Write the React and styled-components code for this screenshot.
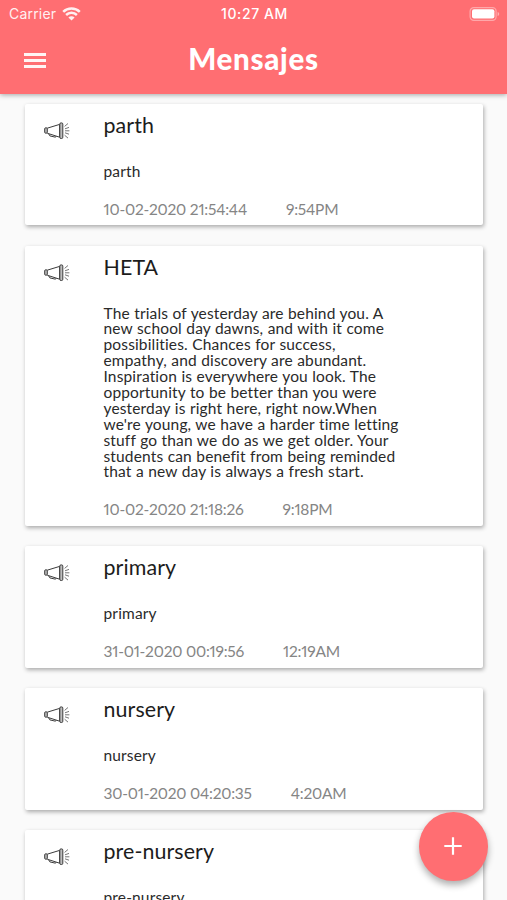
import React from 'react'
import styled, { createGlobalStyle } from 'styled-components';

const messages = [
    { id: 1, title: 'parth', lines: ['parth'], date: '10-02-2020 21:54:44', time: '9:54PM' },
    {
        id: 2,
        title: 'HETA',
        lines: [
            'The trials of yesterday are behind you. A',
            'new school day dawns, and with it come',
            'possibilities. Chances for success,',
            'empathy, and discovery are abundant.',
            'Inspiration is everywhere you look. The',
            'opportunity to be better than you were',
            'yesterday is right here, right now.When',
            "we're young, we have a harder time letting",
            'stuff go than we do as we get older. Your',
            'students can benefit from being reminded',
            'that a new day is always a fresh start.',
        ],
        date: '10-02-2020 21:18:26',
        time: '9:18PM',
    },
    { id: 3, title: 'primary', lines: ['primary'], date: '31-01-2020 00:19:56', time: '12:19AM' },
    { id: 4, title: 'nursery', lines: ['nursery'], date: '30-01-2020 04:20:35', time: '4:20AM' },
    { id: 5, title: 'pre-nursery', lines: ['pre-nursery'] },
]

const WifiIcon = () => (
    <svg width='19' height='14' viewBox='0 0 19 14' fill='none' stroke='#ffffff' strokeWidth='2.5'>
        <path d='M1.2 4.9a11.8 11.8 0 0 1 16.6 0' />
        <path d='M4.1 8a7.7 7.7 0 0 1 10.8 0' />
        <path d='M9.5 13.6L6.4 10.5a4.4 4.4 0 0 1 6.2 0z' fill='#ffffff' stroke='none' />
    </svg>
)

const BatteryIcon = () => (
    <svg width='31' height='14' viewBox='0 0 31 14'>
        <rect x='1.1' y='0.7' width='26' height='12.6' rx='3.6' fill='none' stroke='#ffffff' strokeOpacity='0.4' strokeWidth='1.2' />
        <rect x='3' y='2.3' width='22.4' height='9.2' rx='2' fill='#ffffff' />
        <path d='M28.6 5v4c1-.4 1.6-1.1 1.6-2s-.6-1.6-1.6-2z' fill='#ffffff' fillOpacity='0.45' />
    </svg>
)

const MegaphoneIcon = () => (
    <svg width='26' height='18' viewBox='0 0 26 18' fill='none' stroke='#3c3c3c' strokeWidth='1' strokeLinejoin='round'>
        <path d='M3.2 6.2L15.6 2.4v12.8L3.2 11.2' />
        <rect x='0.7' y='5.8' width='2.6' height='5.4' rx='1' fill='#bdbdbd' />
        <rect x='15.8' y='0.9' width='3' height='15.6' rx='1.2' fill='#bdbdbd' />
        <path d='M4.6 11.8l1.3 2.1 5.6 1.3.6-1' />
        <path d='M20.6 4.4l3.4-2.9M21 6.8l4-1.4M21 8.8h4.4M21 10.8l4 1.4M20.6 13.2l3.4 2.9' stroke='#777777' />
    </svg>
)

const App = () => {
  return (
    <Screen>
        <GlobalStyle />
        <Header>
            <StatusBar>
                <Carrier>Carrier <WifiIcon /></Carrier>
                <Clock>10:27 AM</Clock>
                <Battery><BatteryIcon /></Battery>
            </StatusBar>
            <NavBar>
                <MenuBtn aria-label='menu'>
                    <span />
                    <span />
                    <span />
                </MenuBtn>
                <h1>Mensajes</h1>
            </NavBar>
        </Header>
        <MessageList>
            {messages.map((item) => (
                <Card key={item.id}>
                    <IconDiv><MegaphoneIcon /></IconDiv>
                    <InfoDiv>
                        <h2>{item.title}</h2>
                        <Body>{item.lines.join('\n')}</Body>
                        {item.date && (
                            <DateDiv>
                                <span>{item.date}</span>
                                <span>{item.time}</span>
                            </DateDiv>
                        )}
                    </InfoDiv>
                </Card>
            ))}
        </MessageList>
        <AddBtn aria-label='add'>
            <svg width='18' height='18' viewBox='0 0 18 18' stroke='#ffffff' strokeWidth='2.2'>
                <path d='M9 0.3v17.4M0.3 9h17.4' />
            </svg>
        </AddBtn>
    </Screen>
  )
}

export default App

const GlobalStyle = createGlobalStyle`
    * {
        box-sizing: border-box;
    }

    body {
        margin: 0;
        background-color: #fafafa;
        overflow: hidden;
    }

    h1, h2, p {
        margin: 0;
    }
`;

const Screen = styled.div`
    width: 100%;
    height: 900px;
    overflow: hidden;
    display: flex;
    flex-direction: column;
    background-color: #fafafa;
    font-family: Lato, 'Liberation Sans', sans-serif;
`;

const Header = styled.header`
    flex: none;
    height: 93.5px;
    color: #ffffff;
    background-color: #ff6e72;
    box-shadow: 0 1px 5px rgba(0, 0, 0, 0.35);
    z-index: 1;
`;

const StatusBar = styled.div`
    height: 27px;
    padding: 0 7px 0 9px;
    display: grid;
    grid-template-columns: 1fr auto 1fr;
    align-items: center;
    font-family: Inter, 'Liberation Sans', sans-serif;
    font-size: 14px;
`;

const Carrier = styled.div`
    display: flex;
    align-items: center;
    gap: 6px;
    letter-spacing: 0.2px;
    opacity: 0.9;
`;

const Clock = styled.div`
    font-weight: 500;
    letter-spacing: 0.6px;
`;

const Battery = styled.div`
    display: flex;
    justify-content: flex-end;
`;

const NavBar = styled.div`
    height: 66px;
    display: grid;
    grid-template-columns: 70px 1fr 70px;
    align-items: center;

    h1 {
        padding-bottom: 2px;
        font-size: 29.5px;
        font-weight: 900;
        line-height: 36px;
        letter-spacing: 0.7px;
        text-align: center;
    }
`;

const MenuBtn = styled.button`
    margin-left: 24px;
    padding: 0;
    width: 22px;
    display: flex;
    flex-direction: column;
    gap: 3px;
    border: 0;
    background-color: transparent;

    span {
        height: 3px;
        background-color: #ffffff;
        opacity: 0.92;
    }
`;

const MessageList = styled.main`
    flex: 1;
    min-height: 0;
    padding: 10.3px 24px 0 25px;
    display: flex;
    flex-direction: column;
    gap: 20.3px;
`;

const Card = styled.article`
    flex: none;
    padding: 8px 19px 6.6px;
    display: flex;
    border-radius: 2px;
    background-color: #ffffff;
    box-shadow: 1px 2px 4px rgba(0, 0, 0, 0.32);
`;

const IconDiv = styled.div`
    width: 60px;
    padding-top: 10px;
`;

const InfoDiv = styled.div`
    h2 {
        margin-left: -0.5px;
        font-size: 21.4px;
        font-weight: 400;
        line-height: 26px;
        letter-spacing: 0.1px;
        color: #1c1c1c;
    }
`;

const Body = styled.p`
    margin: 26px 0 0 -0.5px;
    font-size: 15.5px;
    line-height: 15.89px;
    letter-spacing: 0.15px;
    word-spacing: 0.3px;
    white-space: pre;
    color: #2a2a2a;
`;

const DateDiv = styled.div`
    margin: 19px 0 0 -0.5px;
    display: flex;
    gap: 39px;
    font-size: 15.5px;
    line-height: 20px;
    font-variant-numeric: proportional-nums;
    letter-spacing: -0.22px;
    color: #858585;
`;

const AddBtn = styled.button`
    position: absolute;
    left: 419px;
    top: 812px;
    width: 68.5px;
    height: 68.5px;
    padding: 0;
    display: flex;
    align-items: center;
    justify-content: center;
    border: 0;
    border-radius: 50%;
    background-color: #ff6e72;
    box-shadow: 0 4px 7px rgba(0, 0, 0, 0.32);
    z-index: 2;
`;
